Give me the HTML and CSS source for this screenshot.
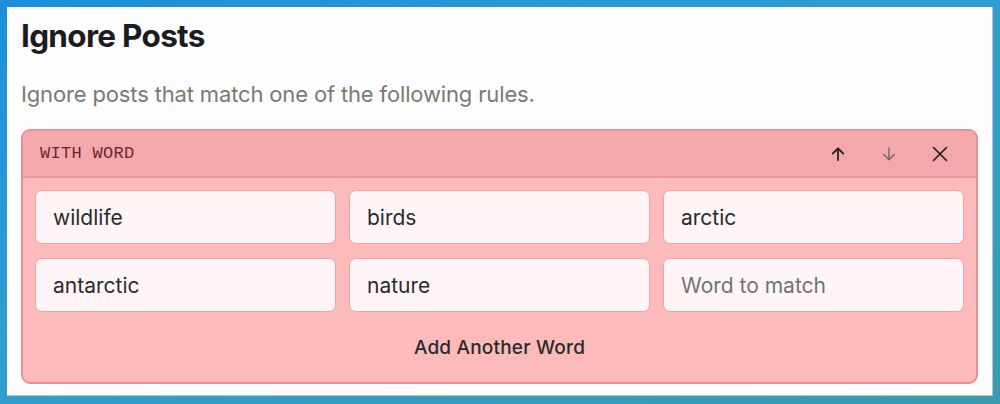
FILE: index.html
```html
<!DOCTYPE html>
<html>
<head>
<meta charset="utf-8">
<link rel="stylesheet" href="styles.css">
</head>
<body>
<div class="panel">
  <h1 class="title">Ignore Posts</h1>
  <p class="lead">Ignore posts that match one of the following rules.</p>
  <section class="rule">
    <header class="rule-head">
      <span class="rule-label">WITH WORD</span>
      <div class="rule-actions">
        <button class="icon-btn" aria-label="Move up">
          <svg width="18" height="18" viewBox="0 0 18 18" fill="none" stroke="#222" stroke-width="1.8" stroke-linecap="round" stroke-linejoin="round"><path d="M9 15V3.5M3.8 8.5L9 3.3l5.2 5.2"/></svg>
        </button>
        <button class="icon-btn dim" aria-label="Move down">
          <svg width="18" height="18" viewBox="0 0 18 18" fill="none" stroke="#7b6a6c" stroke-width="1.5" stroke-linecap="round" stroke-linejoin="round"><path d="M9 3v11.5M3.8 9.5L9 14.7l5.2-5.2"/></svg>
        </button>
        <button class="icon-btn" aria-label="Remove">
          <svg width="18" height="18" viewBox="0 0 18 18" fill="none" stroke="#222" stroke-width="1.7" stroke-linecap="round"><path d="M2.5 2.5l13 13M15.5 2.5l-13 13"/></svg>
        </button>
      </div>
    </header>
    <div class="rule-body">
      <div class="words">
        <input class="word" value="wildlife">
        <input class="word" value="birds">
        <input class="word" value="arctic">
        <input class="word" value="antarctic">
        <input class="word" value="nature">
        <input class="word" placeholder="Word to match">
      </div>
      <button class="add">Add Another Word</button>
    </div>
  </section>
</div>
</body>
</html>
```
FILE: styles.css
```css
html, body {
  margin: 0;
  height: 100%;
}
body {
  background: linear-gradient(160deg, #1b8fdc 0%, #2f9fd2 45%, #3a9bb0 100%);
  padding: 7px;
  box-sizing: border-box;
  font-family: Inter, "Noto Sans", sans-serif;
}
.panel {
  background: #fdfdfd;
  border-right: 1px solid #b9c3c8;
  border-bottom: 1px solid #b9c3c8;
  width: 986px;
  height: 389px;
  box-sizing: border-box;
  padding: 9px 14px 0 14px;
}
.title {
  margin: 0;
  font-size: 31.5px;
  font-weight: 700;
  letter-spacing: -0.7px;
  line-height: 40px;
  color: #1c1c1e;
}
.lead {
  margin: 24px 0 0 0;
  font-size: 22px;
  line-height: 28px;
  color: #7d7874;
  letter-spacing: -0.15px;
}
.rule {
  margin-top: 21px;
  border: 2px solid #ea9095;
  border-radius: 9px;
  background: #fdbabb;
  overflow: hidden;
}
.rule-head {
  display: flex;
  align-items: center;
  justify-content: space-between;
  height: 45px;
  background: #f4a8ab;
  border-bottom: 2px solid #eb999c;
  padding: 0 27px 0 17px;
}
.rule-label {
  font-family: "Liberation Mono", "DejaVu Sans Mono", monospace;
  font-size: 17px;
  color: #6e2430;
  letter-spacing: 0.3px;
}
.rule-actions {
  display: flex;
  gap: 33px;
  align-items: center;
}
.icon-btn {
  border: 0;
  background: none;
  padding: 0;
  width: 18px;
  height: 18px;
  display: flex;
}
.rule-body {
  padding: 12px 12px 0 12px;
  display: flex;
  flex-direction: column;
}
.words {
  display: grid;
  grid-template-columns: repeat(3, 1fr);
  column-gap: 13px;
  row-gap: 14px;
}
.word {
  height: 54px;
  box-sizing: border-box;
  border: 1px solid #eea3a5;
  border-radius: 7px;
  background: #fff5f6;
  padding: 0 17px;
  font-family: Inter, "Noto Sans", sans-serif;
  font-size: 21px;
  color: #2b2b2e;
  min-width: 0;
  outline: none;
}
.word::placeholder {
  color: #6e7378;
}
.add {
  align-self: center;
  border: 0;
  background: none;
  font-family: Inter, "Noto Sans", sans-serif;
  font-size: 19px;
  font-weight: 500;
  letter-spacing: 0.2px;
  color: #2a2a2c;
  height: 70px;
  padding: 0;
}
```
